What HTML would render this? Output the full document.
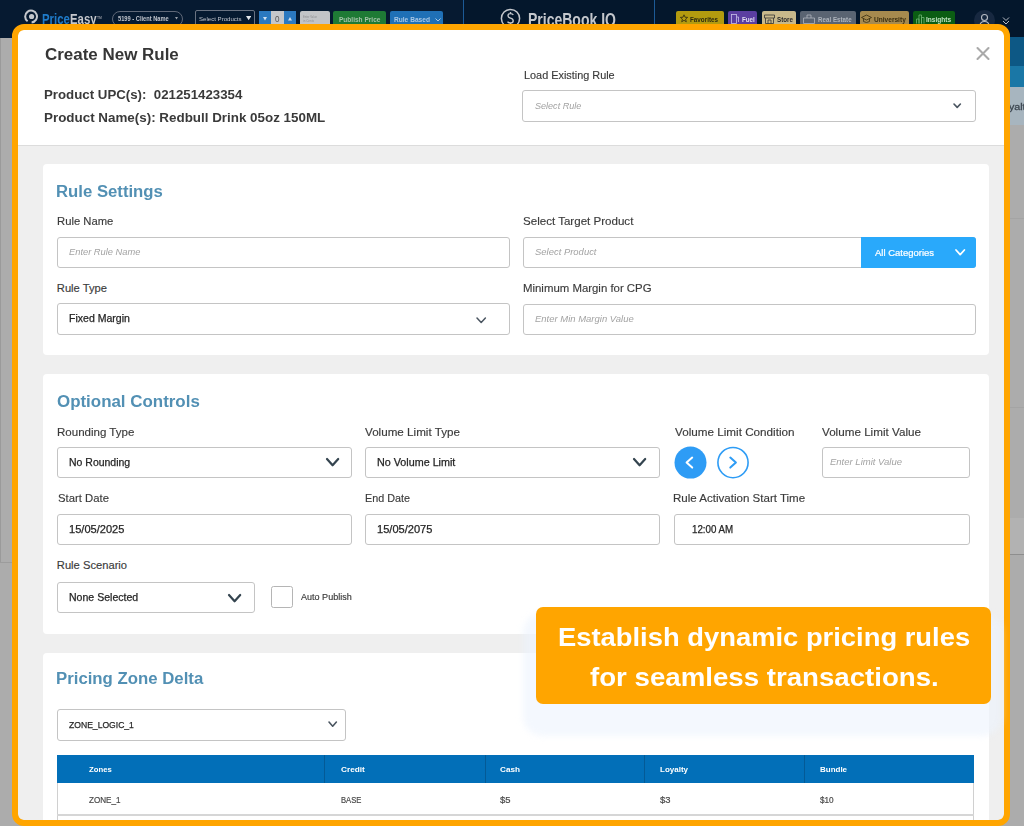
<!DOCTYPE html>
<html><head><meta charset="utf-8"><style>
html,body{margin:0;padding:0;}
body{width:1024px;height:826px;overflow:hidden;position:relative;font-family:"Liberation Sans",sans-serif;background:#acacac;}
.r{position:absolute;}
.t{position:absolute;white-space:pre;transform-origin:0 0;}
</style></head><body>
<div class="r" style="left:0px;top:0px;width:1024px;height:38px;background:#061a31;"></div>
<div class="r" style="left:464px;top:0px;width:560px;height:38px;background:#04172c;"></div>
<div class="r" style="left:0px;top:38px;width:1024px;height:788px;background:#acacac;"></div>
<div class="r" style="left:0px;top:38px;width:1px;height:524px;background:#9a9a9a;"></div>
<div class="r" style="left:0px;top:562px;width:12px;height:1px;background:#9c9c9c;"></div>
<div class="r" style="left:1010px;top:518px;width:14px;height:36px;background:#b2b2b2;"></div>
<div class="r" style="left:1010px;top:554px;width:14px;height:1px;background:#8e8e8e;"></div>
<div class="r" style="left:1010px;top:218px;width:14px;height:1px;background:#a4a4a4;"></div>
<div class="r" style="left:1010px;top:407px;width:14px;height:1px;background:#a4a4a4;"></div>
<div class="r" style="left:1004px;top:37px;width:20px;height:29px;background:#0d5885;"></div>
<div class="r" style="left:1004px;top:66px;width:20px;height:21px;background:#1a77a6;"></div>
<div class="r" style="left:1004px;top:87px;width:20px;height:38px;background:#a7b5bf;"></div>
<div class="t" style="left:997.00px;top:100.54px;font-size:9.59px;line-height:12.47px;color:#3c4650;transform:scaleX(1.1186);-webkit-text-stroke:0.3px #3c4650;">Loyalty</div>
<svg class="r" style="left:24px;top:9px" width="15" height="15" viewBox="0 0 15 15"><path d="M3.6 12.3 A5.9 5.9 0 1 1 7.6 13.4" fill="none" stroke="#c4c7cc" stroke-width="2"/><circle cx="7.6" cy="7.5" r="2.6" fill="#c4c7cc"/></svg>
<div class="t" style="left:41.80px;top:11.44px;font-size:13.81px;line-height:17.95px;color:#1f7bc9;font-weight:bold;transform:scaleX(0.8230);">Price</div>
<div class="t" style="left:69.60px;top:11.44px;font-size:13.81px;line-height:17.95px;color:#c4c7cc;font-weight:bold;transform:scaleX(0.8248);">Easy</div>
<div class="t" style="left:97.00px;top:16.90px;font-size:2.91px;line-height:3.78px;color:#8a8f99;font-weight:bold;transform:scaleX(1.1912);">TM</div>
<div class="r" style="left:112px;top:10.5px;width:71px;height:16px;border:1px solid #5f6878;border-radius:8px;box-sizing:border-box;"></div>
<div class="t" style="left:117.50px;top:15.03px;font-size:6.40px;line-height:8.31px;color:#c0c4cc;font-weight:bold;transform:scaleX(0.8932);">5199 - Client Name</div>
<svg class="r" style="left:174.5px;top:17px" width="3" height="3" viewBox="0 0 3 3"><path d="M0 0 H3 L1.5 2.6z" fill="#9aa0aa"/></svg>
<div class="r" style="left:195px;top:10px;width:59.5px;height:18px;border:1px solid #6a7382;border-radius:2px;box-sizing:border-box;"></div>
<div class="t" style="left:198.75px;top:14.77px;font-size:6.25px;line-height:8.13px;color:#c0c4cc;transform:scaleX(0.9732);">Select Products</div>
<svg class="r" style="left:246px;top:16.3px" width="5.3" height="4.3" viewBox="0 0 5.3 4.3"><path d="M0 0 H5.3 L2.65 4.3z" fill="#e4e6ea"/></svg>
<div class="r" style="left:258.5px;top:11px;width:12px;height:18px;background:#2b79c0;"></div>
<div class="r" style="left:270.5px;top:11px;width:13.5px;height:18px;background:#c5c7ca;"></div>
<div class="r" style="left:284px;top:11px;width:12px;height:18px;background:#2b79c0;"></div>
<svg class="r" style="left:262.5px;top:17px" width="4" height="3.5" viewBox="0 0 4 3.5"><path d="M0 0 H4 L2 3.5z" fill="#cfe0f0"/></svg>
<svg class="r" style="left:288px;top:17px" width="4" height="3.5" viewBox="0 0 4 3.5"><path d="M0 3.5 H4 L2 0z" fill="#cfe0f0"/></svg>
<div class="t" style="left:274.50px;top:13.62px;font-size:9.01px;line-height:11.72px;color:#555;transform:scaleX(0.8979);">0</div>
<div class="r" style="left:300px;top:11px;width:30px;height:18px;background:#c2c4c7;border-radius:2px;"></div>
<div class="t" style="left:303.00px;top:15.13px;font-size:3.78px;line-height:4.91px;color:#8d8f92;transform:scaleX(0.7191);">Enter Value</div>
<div class="t" style="left:303.00px;top:19.13px;font-size:3.78px;line-height:4.91px;color:#8d8f92;transform:scaleX(0.7934);">in Cents</div>
<div class="r" style="left:333px;top:11px;width:53px;height:18px;background:#1e7a35;border-radius:2px;"></div>
<div class="t" style="left:339.00px;top:14.92px;font-size:7.70px;line-height:10.01px;color:#a3c2a8;font-weight:bold;transform:scaleX(0.8503);">Publish Price</div>
<div class="r" style="left:390px;top:11px;width:53px;height:18px;background:#1f70b6;border-radius:2px;"></div>
<div class="t" style="left:394.00px;top:14.92px;font-size:7.70px;line-height:10.01px;color:#a9c8e6;font-weight:bold;transform:scaleX(0.8580);">Rule Based</div>
<svg class="r" style="left:435px;top:17.5px" width="6" height="4" viewBox="0 0 6 4"><path d="M0.5 0.5 L3 3 L5.5 0.5" fill="none" stroke="#a9c8e6" stroke-width="1"/></svg>
<div class="r" style="left:463px;top:0px;width:1px;height:38px;background:#1c5a96;"></div>
<div class="r" style="left:654px;top:0px;width:1px;height:38px;background:#1c5a96;"></div>
<svg class="r" style="left:500px;top:8px" width="22" height="22" viewBox="0 0 22 22"><circle cx="10.5" cy="10.5" r="9.1" fill="none" stroke="#c4c7cc" stroke-width="1.5"/><path d="M13.3 6.8 Q12.6 5.6 10.5 5.6 Q8 5.6 8 7.7 Q8 9.5 10.5 10.1 Q13.2 10.7 13.2 12.8 Q13.2 15 10.5 15 Q8.3 15 7.6 13.6 M10.5 4 V5.6 M10.5 15 V17" fill="none" stroke="#c4c7cc" stroke-width="1.4"/></svg>
<div class="t" style="left:528.30px;top:9.49px;font-size:18.17px;line-height:23.62px;color:#c4c7cc;font-weight:bold;transform:scaleX(0.7713);">PriceBook IQ</div>
<div class="r" style="left:676px;top:11px;width:48px;height:18px;background:#b39b0f;border-radius:2px;"></div>
<svg class="r" style="left:679.5px;top:14px" width="8" height="10" viewBox="0 0 8 10"><path d="M4 0.8 L5 3.2 L7.6 3.4 L5.6 5.1 L6.3 7.8 L4 6.3 L1.7 7.8 L2.4 5.1 L0.4 3.4 L3 3.2z" fill="none" stroke="#2d2a10" stroke-width="0.8"/></svg>
<div class="t" style="left:690.00px;top:14.56px;font-size:7.27px;line-height:9.45px;color:#2d2a10;font-weight:bold;transform:scaleX(0.8665);">Favorites</div>
<div class="r" style="left:727.5px;top:11px;width:29.5px;height:18px;background:#5b3ea1;border-radius:2px;"></div>
<svg class="r" style="left:731px;top:14px" width="9" height="10" viewBox="0 0 9 10"><rect x="0.5" y="0.5" width="5" height="9" fill="none" stroke="#c8c0e8" stroke-width="0.8"/><path d="M5.5 3 H7.5 V8" fill="none" stroke="#c8c0e8" stroke-width="0.8"/></svg>
<div class="t" style="left:741.60px;top:14.56px;font-size:7.27px;line-height:9.45px;color:#e0dcf0;font-weight:bold;transform:scaleX(0.8568);">Fuel</div>
<div class="r" style="left:761.5px;top:11px;width:34.5px;height:18px;background:#c8b98b;border-radius:2px;"></div>
<svg class="r" style="left:764px;top:14px" width="11" height="10" viewBox="0 0 11 10"><path d="M0.5 1 H10.5 V4 H0.5z M1.5 4 V9.5 H9.5 V4 M4 9.5 V6 H7 V9.5" fill="none" stroke="#333" stroke-width="0.8"/></svg>
<div class="t" style="left:776.70px;top:14.56px;font-size:7.27px;line-height:9.45px;color:#2a2a2a;font-weight:bold;transform:scaleX(0.8613);">Store</div>
<div class="r" style="left:800px;top:11px;width:56px;height:18px;background:#5a6472;border-radius:2px;"></div>
<svg class="r" style="left:802.8px;top:14px" width="12" height="10" viewBox="0 0 12 10"><path d="M0.5 4 H11.5 V9.5 H0.5z M4 4 V1 H8 V4" fill="none" stroke="#aeb4bc" stroke-width="0.8"/></svg>
<div class="t" style="left:817.60px;top:14.56px;font-size:7.27px;line-height:9.45px;color:#aeb4bc;font-weight:bold;transform:scaleX(0.8575);">Real Estate</div>
<div class="r" style="left:859.5px;top:11px;width:49.5px;height:18px;background:#a68a4e;border-radius:2px;"></div>
<svg class="r" style="left:861.3px;top:14px" width="11" height="10" viewBox="0 0 11 10"><path d="M0.5 3.5 L5.5 1 L10.5 3.5 L5.5 6z M2.5 4.5 V7.5 Q5.5 9.5 8.5 7.5 V4.5" fill="none" stroke="#3a2e10" stroke-width="0.8"/></svg>
<div class="t" style="left:874.00px;top:14.56px;font-size:7.27px;line-height:9.45px;color:#3a2e10;font-weight:bold;transform:scaleX(0.9049);">University</div>
<div class="r" style="left:913px;top:11px;width:41.5px;height:18px;background:#0b5d13;border-radius:2px;"></div>
<svg class="r" style="left:916.2px;top:14px" width="9" height="10" viewBox="0 0 9 10"><path d="M0.5 9.5 V5 H3 V9.5 M3 9.5 V1 H5.5 V9.5 M5.5 9.5 V3.5 H8 V9.5" fill="none" stroke="#6fb574" stroke-width="0.8"/></svg>
<div class="t" style="left:925.70px;top:14.56px;font-size:7.27px;line-height:9.45px;color:#bfe3c0;font-weight:bold;transform:scaleX(0.9045);">Insights</div>
<div class="r" style="left:974px;top:10px;width:20.5px;height:20.5px;background:#172840;border-radius:50%;"></div>
<svg class="r" style="left:979px;top:13px" width="11" height="14" viewBox="0 0 11 14"><circle cx="5.5" cy="4.5" r="3" fill="none" stroke="#b8bcc4" stroke-width="1.1"/><path d="M1 13 Q1 8.5 5.5 8.5 Q10 8.5 10 13" fill="none" stroke="#b8bcc4" stroke-width="1.1"/></svg>
<svg class="r" style="left:1002px;top:16px" width="8" height="10" viewBox="0 0 8 10"><path d="M1 1.5 L4 4.5 L7 1.5 M1 5 L4 8 L7 5" fill="none" stroke="#b8bcc4" stroke-width="1"/></svg>
<div class="r" style="left:18px;top:30px;width:986px;height:790px;background:#efefef;"></div>
<div class="r" style="left:18px;top:30px;width:986px;height:115px;background:#fff;"></div>
<div class="r" style="left:18px;top:145px;width:986px;height:1px;background:#dcdcdc;"></div>
<div class="t" style="left:45.30px;top:44.02px;font-size:16.13px;line-height:20.97px;color:#363636;font-weight:bold;transform:scaleX(1.0524);">Create New Rule</div>
<div class="t" style="left:44.40px;top:86.95px;font-size:12.79px;line-height:16.63px;color:#3a3a3a;font-weight:bold;transform:scaleX(1.0379);">Product UPC(s):  021251423354</div>
<div class="t" style="left:44.40px;top:109.55px;font-size:12.79px;line-height:16.63px;color:#3a3a3a;font-weight:bold;transform:scaleX(1.0478);">Product Name(s): Redbull Drink 05oz 150ML</div>
<div class="t" style="left:524.00px;top:68.04px;font-size:11.19px;line-height:14.55px;color:#3b3b3b;transform:scaleX(0.9719);-webkit-text-stroke:0.15px #3b3b3b;">Load Existing Rule</div>
<svg class="r" style="left:975px;top:46px" width="16" height="15" viewBox="0 0 16 15"><path d="M2.5 2 L13.5 13 M13.5 2 L2.5 13" stroke="#a9a9a9" stroke-width="2.1" stroke-linecap="round"/></svg>
<div class="r" style="left:522px;top:90px;width:454px;height:31.5px;background:#fff;border:1px solid #c4c4c4;border-radius:3px;box-sizing:border-box;"></div>
<div class="t" style="left:534.70px;top:100.58px;font-size:9.16px;line-height:11.9px;color:#a3a3a3;font-style:italic;transform:scaleX(0.9887);">Select Rule</div>
<svg class="r" style="left:952.40px;top:102.30px" width="10.40" height="7.40" viewBox="0 0 10.40 7.40"><path d="M2 2 L5.20 5.40 L8.40 2" fill="none" stroke="#4a5560" stroke-width="1.6" stroke-linecap="round" stroke-linejoin="round"/></svg>
<div class="r" style="left:43px;top:164px;width:946px;height:191px;background:#fff;border-radius:4px;"></div>
<div class="t" style="left:56.40px;top:181.22px;font-size:16.13px;line-height:20.97px;color:#5290b4;font-weight:bold;transform:scaleX(1.0379);">Rule Settings</div>
<div class="t" style="left:56.80px;top:214.34px;font-size:11.19px;line-height:14.55px;color:#3b3b3b;transform:scaleX(1.0057);-webkit-text-stroke:0.15px #3b3b3b;">Rule Name</div>
<div class="r" style="left:56.5px;top:237px;width:453.5px;height:31px;background:#fff;border:1px solid #c4c4c4;border-radius:3px;box-sizing:border-box;"></div>
<div class="t" style="left:68.50px;top:247.18px;font-size:9.16px;line-height:11.9px;color:#a3a3a3;font-style:italic;transform:scaleX(1.0166);">Enter Rule Name</div>
<div class="t" style="left:56.80px;top:281.04px;font-size:11.19px;line-height:14.55px;color:#3b3b3b;-webkit-text-stroke:0.15px #3b3b3b;">Rule Type</div>
<div class="r" style="left:56.5px;top:303px;width:453.5px;height:31.5px;background:#fff;border:1px solid #c4c4c4;border-radius:3px;box-sizing:border-box;"></div>
<div class="t" style="left:68.80px;top:312.16px;font-size:10.17px;line-height:13.23px;color:#262626;transform:scaleX(1.0373);-webkit-text-stroke:0.25px #262626;">Fixed Margin</div>
<svg class="r" style="left:475.10px;top:316.25px" width="12.40" height="8.50" viewBox="0 0 12.40 8.50"><path d="M2 2 L6.20 6.50 L10.40 2" fill="none" stroke="#4a5560" stroke-width="1.5" stroke-linecap="round" stroke-linejoin="round"/></svg>
<div class="t" style="left:523.00px;top:214.34px;font-size:11.19px;line-height:14.55px;color:#3b3b3b;transform:scaleX(1.0337);-webkit-text-stroke:0.15px #3b3b3b;">Select Target Product</div>
<div class="r" style="left:522.5px;top:237px;width:453.5px;height:31px;background:#fff;border:1px solid #c4c4c4;border-radius:3px;box-sizing:border-box;"></div>
<div class="r" style="left:861px;top:237px;width:115px;height:31px;background:#29a9fb;border-radius:0 3px 3px 0;"></div>
<div class="t" style="left:875.20px;top:247.65px;font-size:8.58px;line-height:11.15px;color:#fff;transform:scaleX(1.1052);-webkit-text-stroke:0.2px #fff;">All Categories</div>
<svg class="r" style="left:954.40px;top:247.50px" width="12.40" height="8.60" viewBox="0 0 12.40 8.60"><path d="M2 2 L6.20 6.60 L10.40 2" fill="none" stroke="#fff" stroke-width="1.8" stroke-linecap="round" stroke-linejoin="round"/></svg>
<div class="t" style="left:534.70px;top:246.78px;font-size:9.16px;line-height:11.9px;color:#a3a3a3;font-style:italic;transform:scaleX(1.0327);">Select Product</div>
<div class="t" style="left:523.00px;top:281.04px;font-size:11.19px;line-height:14.55px;color:#3b3b3b;transform:scaleX(1.0187);-webkit-text-stroke:0.15px #3b3b3b;">Minimum Margin for CPG</div>
<div class="r" style="left:522.5px;top:304px;width:453.5px;height:31px;background:#fff;border:1px solid #c4c4c4;border-radius:3px;box-sizing:border-box;"></div>
<div class="t" style="left:534.70px;top:313.88px;font-size:9.16px;line-height:11.9px;color:#a3a3a3;font-style:italic;transform:scaleX(1.0352);">Enter Min Margin Value</div>
<div class="r" style="left:43px;top:374px;width:946px;height:260px;background:#fff;border-radius:4px;"></div>
<div class="t" style="left:57.40px;top:391.22px;font-size:16.13px;line-height:20.97px;color:#5290b4;font-weight:bold;transform:scaleX(1.0497);">Optional Controls</div>
<div class="t" style="left:57.00px;top:424.54px;font-size:11.19px;line-height:14.55px;color:#3b3b3b;transform:scaleX(1.0308);-webkit-text-stroke:0.15px #3b3b3b;">Rounding Type</div>
<div class="r" style="left:57px;top:447px;width:295px;height:31px;background:#fff;border:1px solid #c4c4c4;border-radius:3px;box-sizing:border-box;"></div>
<div class="t" style="left:68.80px;top:455.56px;font-size:10.17px;line-height:13.23px;color:#262626;transform:scaleX(1.0321);-webkit-text-stroke:0.25px #262626;">No Rounding</div>
<svg class="r" style="left:324.60px;top:457.15px" width="15.20" height="10.30" viewBox="0 0 15.20 10.30"><path d="M2 2 L7.60 8.30 L13.20 2" fill="none" stroke="#34444f" stroke-width="2.2" stroke-linecap="round" stroke-linejoin="round"/></svg>
<div class="t" style="left:364.70px;top:424.54px;font-size:11.19px;line-height:14.55px;color:#3b3b3b;transform:scaleX(1.0412);-webkit-text-stroke:0.15px #3b3b3b;">Volume Limit Type</div>
<div class="r" style="left:364.5px;top:447px;width:295.5px;height:31px;background:#fff;border:1px solid #c4c4c4;border-radius:3px;box-sizing:border-box;"></div>
<div class="t" style="left:376.80px;top:455.56px;font-size:10.17px;line-height:13.23px;color:#262626;transform:scaleX(1.0597);-webkit-text-stroke:0.25px #262626;">No Volume Limit</div>
<svg class="r" style="left:632.40px;top:457.15px" width="15.20" height="10.30" viewBox="0 0 15.20 10.30"><path d="M2 2 L7.60 8.30 L13.20 2" fill="none" stroke="#34444f" stroke-width="2.2" stroke-linecap="round" stroke-linejoin="round"/></svg>
<div class="t" style="left:675.10px;top:424.54px;font-size:11.19px;line-height:14.55px;color:#3b3b3b;transform:scaleX(1.0448);-webkit-text-stroke:0.15px #3b3b3b;">Volume Limit Condition</div>
<svg class="r" style="left:674px;top:446px" width="77" height="34" viewBox="0 0 77 34"><circle cx="16.5" cy="16.6" r="16" fill="#2e9cf5"/><path d="M18.2 11.6 L12.6 16.6 L18.2 21.6" fill="none" stroke="#fff" stroke-width="2" stroke-linecap="round" stroke-linejoin="round"/><circle cx="59" cy="16.6" r="15.1" fill="#fff" stroke="#2e9cf5" stroke-width="1.6"/><path d="M56.3 11.6 L61.9 16.6 L56.3 21.6" fill="none" stroke="#2e9cf5" stroke-width="2" stroke-linecap="round" stroke-linejoin="round"/></svg>
<div class="t" style="left:822.00px;top:424.54px;font-size:11.19px;line-height:14.55px;color:#3b3b3b;transform:scaleX(1.0424);-webkit-text-stroke:0.15px #3b3b3b;">Volume Limit Value</div>
<div class="r" style="left:822px;top:447px;width:148px;height:31px;background:#fff;border:1px solid #c4c4c4;border-radius:3px;box-sizing:border-box;"></div>
<div class="t" style="left:830.20px;top:456.58px;font-size:9.16px;line-height:11.9px;color:#a3a3a3;font-style:italic;transform:scaleX(1.0376);">Enter Limit Value</div>
<div class="t" style="left:57.60px;top:491.34px;font-size:11.19px;line-height:14.55px;color:#3b3b3b;transform:scaleX(1.0122);-webkit-text-stroke:0.15px #3b3b3b;">Start Date</div>
<div class="r" style="left:57px;top:514px;width:295px;height:31px;background:#fff;border:1px solid #c4c4c4;border-radius:3px;box-sizing:border-box;"></div>
<div class="t" style="left:68.80px;top:522.66px;font-size:10.17px;line-height:13.23px;color:#262626;transform:scaleX(1.0899);-webkit-text-stroke:0.25px #262626;">15/05/2025</div>
<div class="t" style="left:364.70px;top:491.34px;font-size:11.19px;line-height:14.55px;color:#3b3b3b;transform:scaleX(0.9643);-webkit-text-stroke:0.15px #3b3b3b;">End Date</div>
<div class="r" style="left:364.5px;top:514px;width:295.5px;height:31px;background:#fff;border:1px solid #c4c4c4;border-radius:3px;box-sizing:border-box;"></div>
<div class="t" style="left:377.00px;top:522.66px;font-size:10.17px;line-height:13.23px;color:#262626;transform:scaleX(1.0899);-webkit-text-stroke:0.25px #262626;">15/05/2075</div>
<div class="t" style="left:672.80px;top:491.34px;font-size:11.19px;line-height:14.55px;color:#3b3b3b;transform:scaleX(1.0317);-webkit-text-stroke:0.15px #3b3b3b;">Rule Activation Start Time</div>
<div class="r" style="left:674px;top:513.5px;width:296px;height:31.0px;background:#fff;border:1px solid #c4c4c4;border-radius:3px;box-sizing:border-box;"></div>
<div class="t" style="left:692.20px;top:522.66px;font-size:10.17px;line-height:13.23px;color:#262626;transform:scaleX(0.9607);-webkit-text-stroke:0.25px #262626;">12:00 AM</div>
<div class="t" style="left:56.80px;top:558.04px;font-size:11.19px;line-height:14.55px;color:#3b3b3b;-webkit-text-stroke:0.15px #3b3b3b;">Rule Scenario</div>
<div class="r" style="left:56.5px;top:582px;width:198.0px;height:31px;background:#fff;border:1px solid #c4c4c4;border-radius:3px;box-sizing:border-box;"></div>
<div class="t" style="left:68.80px;top:591.36px;font-size:10.17px;line-height:13.23px;color:#262626;transform:scaleX(1.0383);-webkit-text-stroke:0.25px #262626;">None Selected</div>
<svg class="r" style="left:227.00px;top:592.55px" width="15.20" height="10.30" viewBox="0 0 15.20 10.30"><path d="M2 2 L7.60 8.30 L13.20 2" fill="none" stroke="#34444f" stroke-width="2.2" stroke-linecap="round" stroke-linejoin="round"/></svg>
<div class="r" style="left:271px;top:586px;width:21.5px;height:21.5px;background:#fff;border:1px solid #b5b5b5;border-radius:2.5px;box-sizing:border-box;"></div>
<div class="t" style="left:301.10px;top:591.70px;font-size:8.43px;line-height:10.96px;color:#3a3a3a;transform:scaleX(1.0732);-webkit-text-stroke:0.15px #3b3b3b;">Auto Publish</div>
<div class="r" style="left:43px;top:653px;width:946px;height:167px;background:#fff;border-radius:4px 4px 0 0;"></div>
<div class="t" style="left:56.40px;top:668.12px;font-size:16.13px;line-height:20.97px;color:#5290b4;font-weight:bold;transform:scaleX(1.0413);">Pricing Zone Delta</div>
<div class="r" style="left:57px;top:709px;width:289px;height:32px;background:#fff;border:1px solid #c4c4c4;border-radius:3px;box-sizing:border-box;"></div>
<div class="t" style="left:68.75px;top:718.74px;font-size:9.59px;line-height:12.47px;color:#262626;transform:scaleX(0.8965);-webkit-text-stroke:0.25px #262626;">ZONE_LOGIC_1</div>
<svg class="r" style="left:326.90px;top:720.20px" width="11.40" height="8.20" viewBox="0 0 11.40 8.20"><path d="M2 2 L5.70 6.20 L9.40 2" fill="none" stroke="#4a5560" stroke-width="1.6" stroke-linecap="round" stroke-linejoin="round"/></svg>
<div class="r" style="left:57px;top:755px;width:917px;height:28px;background:#026fb8;"></div>
<div class="r" style="left:57px;top:783px;width:917px;height:37px;background:#fff;border-left:1px solid #d0d0d0;border-right:1px solid #d0d0d0;box-sizing:border-box;"></div>
<div class="r" style="left:57px;top:814px;width:917px;height:1.5px;background:#d6d6d6;"></div>
<div class="r" style="left:324px;top:755px;width:1px;height:28px;background:#035a96;"></div>
<div class="r" style="left:484.5px;top:755px;width:1px;height:28px;background:#035a96;"></div>
<div class="r" style="left:644px;top:755px;width:1px;height:28px;background:#035a96;"></div>
<div class="r" style="left:803.5px;top:755px;width:1px;height:28px;background:#035a96;"></div>
<div class="t" style="left:89.00px;top:765.32px;font-size:7.70px;line-height:10.01px;color:#fff;font-weight:bold;transform:scaleX(1.0050);">Zones</div>
<div class="t" style="left:89.00px;top:794.82px;font-size:9.01px;line-height:11.72px;color:#4a4a4a;transform:scaleX(0.9014);-webkit-text-stroke:0.2px #4a4a4a;">ZONE_1</div>
<div class="t" style="left:340.50px;top:765.32px;font-size:7.70px;line-height:10.01px;color:#fff;font-weight:bold;transform:scaleX(1.0738);">Credit</div>
<div class="t" style="left:340.50px;top:794.82px;font-size:9.01px;line-height:11.72px;color:#4a4a4a;transform:scaleX(0.8485);-webkit-text-stroke:0.2px #4a4a4a;">BASE</div>
<div class="t" style="left:500.40px;top:765.32px;font-size:7.70px;line-height:10.01px;color:#fff;font-weight:bold;transform:scaleX(1.0617);">Cash</div>
<div class="t" style="left:500.40px;top:794.82px;font-size:9.01px;line-height:11.72px;color:#4a4a4a;transform:scaleX(1.0475);-webkit-text-stroke:0.2px #4a4a4a;">$5</div>
<div class="t" style="left:659.70px;top:765.32px;font-size:7.70px;line-height:10.01px;color:#fff;font-weight:bold;transform:scaleX(1.0419);">Loyalty</div>
<div class="t" style="left:659.70px;top:794.82px;font-size:9.01px;line-height:11.72px;color:#4a4a4a;transform:scaleX(1.0475);-webkit-text-stroke:0.2px #4a4a4a;">$3</div>
<div class="t" style="left:819.70px;top:765.32px;font-size:7.70px;line-height:10.01px;color:#fff;font-weight:bold;transform:scaleX(1.0381);">Bundle</div>
<div class="t" style="left:819.70px;top:794.82px;font-size:9.01px;line-height:11.72px;color:#4a4a4a;transform:scaleX(0.9112);-webkit-text-stroke:0.2px #4a4a4a;">$10</div>
<div class="r" style="left:12px;top:24px;width:998px;height:802px;box-sizing:border-box;border:6px solid #ffa500;border-radius:12px;"></div>
<svg class="r" style="left:18px;top:30px" width="986" height="790" viewBox="0 0 986 790"><path d="M0 0 h5 a5 5 0 0 0 -5 5z M986 0 h-5 a5 5 0 0 1 5 5z M0 790 h5 a5 5 0 0 1 -5 -5z M986 790 h-5 a5 5 0 0 0 5 -5z" fill="#ffa500"/></svg>
<div class="r" style="left:523px;top:613px;width:479px;height:123px;background:rgba(236,243,253,0.6);border-radius:20px;filter:blur(3px);"></div>
<div class="r" style="left:535.7px;top:607.3px;width:455.3px;height:96.7px;background:#ffa500;border-radius:7px;"></div>
<div class="t" style="left:558.00px;top:620.13px;font-size:26.45px;line-height:34.39px;color:#fff;font-weight:bold;transform:scaleX(1.0351);">Establish dynamic pricing rules</div>
<div class="t" style="left:589.70px;top:659.83px;font-size:26.45px;line-height:34.39px;color:#fff;font-weight:bold;transform:scaleX(1.0457);">for seamless transactions.</div>
</body></html>
